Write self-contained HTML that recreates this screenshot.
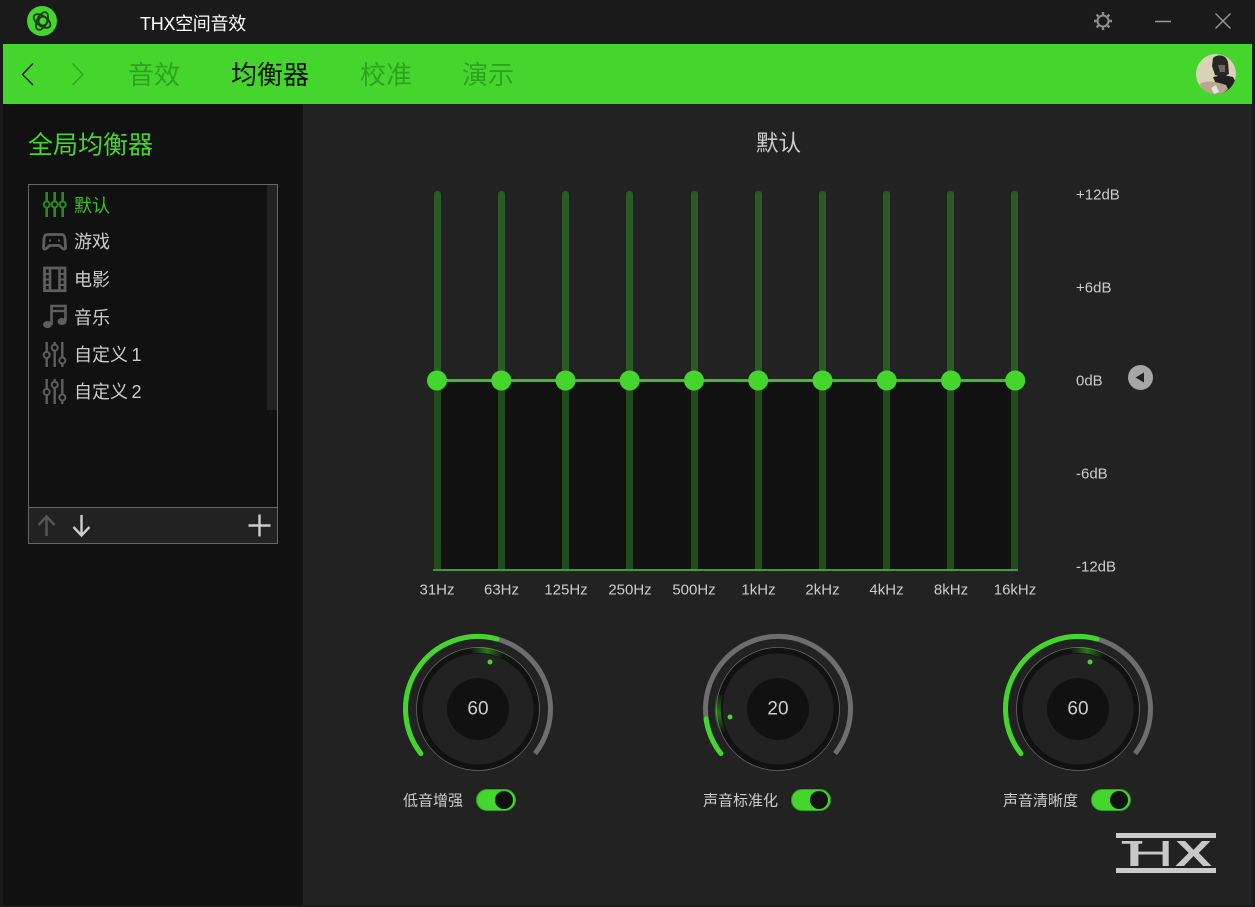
<!DOCTYPE html>
<html lang="zh"><head><meta charset="utf-8"><title>THX空间音效</title>
<style>
html,body{margin:0;padding:0;background:#1a1a1a;}
body{width:1255px;height:907px;overflow:hidden;position:relative;font-family:"Liberation Sans","Noto Sans CJK SC",sans-serif;color:#ccc;}
.a{position:absolute;white-space:nowrap;}
.t{line-height:1;transform:translateY(-50%);}
.c{transform:translate(-50%,-50%);line-height:1;}
.tog{position:absolute;top:789px;width:40px;height:22px;border-radius:11px;background:#44d62c;box-sizing:border-box;border:1px solid #2fa31f;}
.tog i{position:absolute;right:2px;top:1px;width:18px;height:18px;border-radius:9px;background:#111;}
</style></head><body>
<div class="a" style="left:3px;top:44px;width:1249px;height:60px;background:#44d62c"></div>
<div class="a" style="left:3px;top:104px;width:300px;height:801px;background:#111"></div>
<div class="a" style="left:303px;top:104px;width:949px;height:801px;background:#222"></div>

<svg class="a" style="left:0;top:0" width="1255" height="907" viewBox="0 0 1255 907" fill="none">
<defs>
<linearGradient id="g1" gradientUnits="userSpaceOnUse" x1="-8" y1="0" x2="26" y2="0"><stop offset="0" stop-color="#44d62c" stop-opacity="0"/><stop offset=".5" stop-color="#44d62c" stop-opacity=".5"/><stop offset="1" stop-color="#44d62c" stop-opacity="0"/></linearGradient>
<linearGradient id="g2" gradientUnits="userSpaceOnUse" x1="0" y1="-16" x2="0" y2="24"><stop offset="0" stop-color="#44d62c" stop-opacity="0"/><stop offset=".5" stop-color="#44d62c" stop-opacity=".5"/><stop offset="1" stop-color="#44d62c" stop-opacity="0"/></linearGradient>
<g id="knob">
<path d="M57.1 44.6A72.5 72.5 0 1 0 -57.1 44.6" stroke="#6e6e6e" stroke-width="5"/>
<circle r="61.5" fill="#111" stroke="#666" stroke-width=".8"/>
<circle r="55.5" fill="#222"/>
<circle r="31" fill="#111"/>
</g>
</defs>
<!-- logo -->
<circle cx="42" cy="21" r="15" fill="#44d62c"/>
<g stroke="#1c3a18" stroke-width="1.8" transform="translate(42 21)">
<ellipse rx="9.5" ry="5" transform="rotate(35)"/><ellipse rx="9.5" ry="5" transform="rotate(-65)"/><circle r="4.5" cx="1" cy="0"/>
</g>
<!-- window controls -->
<g transform="translate(1103 21)" stroke="#8e8e8e">
<circle r="5.5" stroke-width="2"/>
<path d="M0-9V-6.5M0 6.5V9M-9 0H-6.5M6.5 0H9M-6.4-6.4-4.6-4.6M4.6 4.6 6.4 6.4M-6.4 6.4-4.6 4.6M4.6-4.6 6.4-6.4" stroke-width="2.4"/>
</g>
<path d="M1155 21.5H1171" stroke="#999" stroke-width="1.5"/>
<path d="M1215.5 13.5 1230.5 28.5M1230.5 13.5 1215.5 28.5" stroke="#999" stroke-width="1.4"/>
<!-- nav arrows -->
<path d="M33 63.5 22.5 74.5 33 85" stroke="#111" stroke-width="1.3"/>
<path d="M72.5 63.5 83 74.5 72.5 85" stroke="#2ea320" stroke-width="1.3"/>
<!-- avatar -->
<clipPath id="av"><circle cx="1216" cy="74" r="20"/></clipPath>
<g clip-path="url(#av)">
<rect x="1196" y="54" width="40" height="40" fill="#d9d1b9"/>
<path d="M1213 58C1217 54 1226 54 1228 62L1229 74 1222 77 1215 75 1212 66Z" fill="#2a2624"/>
<path d="M1218 65H1225L1225 72 1220 72Z" fill="#6f675e"/>
<path d="M1213 77 1224 75 1233 77 1237 84 1235 94 1216 94 1216 84Z" fill="#22201f"/>
<path d="M1200 84C1205 80 1214 81 1226 85L1228 89 1222 94 1208 94 1202 90Z" fill="#b9a593"/>
<path d="M1211 88 1216 85 1219 92 1214 94Z" fill="#e8e4da"/>
</g>
<!-- eq -->
<rect x="437" y="381" width="577" height="189" fill="#111"/>
<g fill="#2b5a26">
<rect x="434" y="191" width="7" height="195" rx="3"/><rect x="498" y="191" width="7" height="195" rx="3"/><rect x="562" y="191" width="7" height="195" rx="3"/><rect x="626" y="191" width="7" height="195" rx="3"/><rect x="691" y="191" width="7" height="195" rx="3"/><rect x="755" y="191" width="7" height="195" rx="3"/><rect x="819" y="191" width="7" height="195" rx="3"/><rect x="883" y="191" width="7" height="195" rx="3"/><rect x="947" y="191" width="7" height="195" rx="3"/><rect x="1011" y="191" width="7" height="195" rx="3"/>
</g>
<g fill="#214c1c">
<rect x="434" y="380" width="7" height="190"/><rect x="498" y="380" width="7" height="190"/><rect x="562" y="380" width="7" height="190"/><rect x="626" y="380" width="7" height="190"/><rect x="691" y="380" width="7" height="190"/><rect x="755" y="380" width="7" height="190"/><rect x="819" y="380" width="7" height="190"/><rect x="883" y="380" width="7" height="190"/><rect x="947" y="380" width="7" height="190"/><rect x="1011" y="380" width="7" height="190"/>
</g>
<rect x="433" y="569" width="585" height="2" fill="#34a526"/>
<rect x="437" y="379" width="578" height="3" fill="#3cc028"/>
<g fill="#44d62c">
<circle cx="437" cy="380.5" r="10"/><circle cx="501.3" cy="380.5" r="10"/><circle cx="565.5" cy="380.5" r="10"/><circle cx="629.7" cy="380.5" r="10"/><circle cx="694" cy="380.5" r="10"/><circle cx="758.2" cy="380.5" r="10"/><circle cx="822.5" cy="380.5" r="10"/><circle cx="886.7" cy="380.5" r="10"/><circle cx="951" cy="380.5" r="10"/><circle cx="1015.2" cy="380.5" r="10"/>
</g>
<circle cx="1140.5" cy="377.5" r="12.5" fill="#a6a6a6"/>
<path d="M1135.5 377.5 1144 372.5V382.5Z" fill="#222"/>
<!-- list box -->
<rect x="28.5" y="184.5" width="249" height="359" stroke="#666" fill="none"/>
<rect x="267" y="185" width="10" height="225" fill="#222"/>
<rect x="29" y="508" width="248" height="35" fill="#222"/>
<path d="M29 507.5H277" stroke="#666"/>
<path d="M46.5 536V516.5M38.5 525 46.5 516.5 54.5 525" stroke="#555" stroke-width="2.4"/>
<path d="M81.5 515V535.5M73.5 527 81.5 535.5 89.5 527" stroke="#ccc" stroke-width="2.4"/>
<path d="M259.5 514.5V536.5M248.5 525.5H270.5" stroke="#ccc" stroke-width="2.4"/>
<!-- list icons -->
<g stroke="#2a8a20" stroke-width="2.6">
<path d="M46.7 192V217M54.7 192V217M62.7 192V217"/>
<g fill="#111" stroke-width="2"><circle cx="46.7" cy="204.5" r="3"/><circle cx="54.7" cy="204.5" r="3"/><circle cx="62.7" cy="204.5" r="3"/></g>
</g>
<g stroke="#5e5e5e" stroke-width="2.8">
<path d="M47.5 234.5H61.5C64 234.5 64.7 236 65 239L65.5 247.5C65.5 249.5 63.5 249.5 62 248L59.5 245.5H49.5L47 248C45.5 249.5 43.5 249.5 43.5 247.5L44 239C44.3 236 45 234.5 47.5 234.5Z"/>
<path d="M49 240.5H51M58 240.5H60" stroke-width="2"/>
<rect x="44.5" y="268" width="20.5" height="22.7" stroke-width="2.8"/>
<path d="M50 268V290.7M59.5 268V290.7" stroke-width="2.6"/>
<path d="M44 274H50M59 274H65M44 279.5H50M59 279.5H65M44 285H50M59 285H65" stroke-width="2"/>
<path d="M51.5 325V306H65.5V321" stroke-width="2.6"/>
<path d="M51.5 311H65.5" stroke-width="2.4"/>
</g>
<ellipse cx="47.5" cy="324.5" rx="4.5" ry="3.5" fill="#5e5e5e"/>
<ellipse cx="62" cy="321.5" rx="4.5" ry="3.5" fill="#5e5e5e"/>
<g stroke="#5e5e5e" stroke-width="2.4">
<path d="M46.7 342V367M54.7 342V367M62.3 342V367"/>
<g fill="#111" stroke-width="2"><circle cx="46.7" cy="355" r="3"/><circle cx="54.7" cy="347.7" r="3"/><circle cx="62.3" cy="360.5" r="3"/></g>
<path d="M46.7 379V404M54.7 379V404M62.3 379V404"/>
<g fill="#111" stroke-width="2"><circle cx="46.7" cy="392" r="3"/><circle cx="54.7" cy="384.7" r="3"/><circle cx="62.3" cy="397.5" r="3"/></g>
</g>
<!-- knobs -->
<g transform="translate(478 709)">
<use href="#knob"/>
<path d="M-57.1 44.6A72.5 72.5 0 0 1 19 -70" stroke="#44d62c" stroke-width="5" stroke-linecap="round"/>
<path d="M-8 -58.5A59 59 0 0 1 26 -53" stroke="url(#g1)" stroke-width="6"/>
<circle cx="12" cy="-47" r="2.5" fill="#44d62c"/>
</g>
<g transform="translate(778 709)">
<use href="#knob"/>
<path d="M-57.1 44.6A72.5 72.5 0 0 1 -72 9.8" stroke="#44d62c" stroke-width="5" stroke-linecap="round"/>
<path d="M-58 -16A60 60 0 0 0 -55 24" stroke="url(#g2)" stroke-width="6"/>
<circle cx="-48" cy="8" r="2.5" fill="#44d62c"/>
</g>
<g transform="translate(1078 709)">
<use href="#knob"/>
<path d="M-57.1 44.6A72.5 72.5 0 0 1 19 -70" stroke="#44d62c" stroke-width="5" stroke-linecap="round"/>
<path d="M-8 -58.5A59 59 0 0 1 26 -53" stroke="url(#g1)" stroke-width="6"/>
<circle cx="12" cy="-47" r="2.5" fill="#44d62c"/>
</g>
<!-- THX logo -->
<rect x="1116" y="833" width="100" height="5" fill="#ccc"/>
<rect x="1116" y="868" width="100" height="5" fill="#ccc"/>
<g font-family="Liberation Sans" font-size="36" fill="#c8c8c8">
<text x="1121" y="866" textLength="22" lengthAdjust="spacingAndGlyphs">T</text>
<text x="1127" y="866" textLength="47" lengthAdjust="spacingAndGlyphs">H</text>
<text x="1175" y="866" font-weight="bold" textLength="37" lengthAdjust="spacingAndGlyphs">X</text>
</g>
</svg>

<div class="a t" style="left:140px;top:24px;font-size:18px;color:#fff;letter-spacing:-.3px">THX空间音效</div>
<div class="a t" style="left:128px;top:75px;font-size:26px;color:#2ea320">音效</div>
<div class="a t" style="left:231px;top:75px;font-size:26px;color:#111">均衡器</div>
<div class="a t" style="left:360px;top:75px;font-size:26px;color:#2ea320">校准</div>
<div class="a t" style="left:462px;top:75px;font-size:26px;color:#2ea320">演示</div>

<div class="a t" style="left:28px;top:146px;font-size:25px;color:#44d62c">全局均衡器</div>
<div class="a t" style="left:74px;top:206px;font-size:18px;color:#3cc028">默认</div>
<div class="a t" style="left:74px;top:242px;font-size:18px">游戏</div>
<div class="a t" style="left:74px;top:280px;font-size:18px">电影</div>
<div class="a t" style="left:74px;top:318px;font-size:18px">音乐</div>
<div class="a t" style="left:74px;top:355px;font-size:18px;word-spacing:-1.5px">自定义 1</div>
<div class="a t" style="left:74px;top:392px;font-size:18px;word-spacing:-1.5px">自定义 2</div>

<div class="a c" style="left:778.5px;top:144px;font-size:22.5px">默认</div>

<div class="a t" style="left:1076px;top:195px;font-size:15px">+12dB</div>
<div class="a t" style="left:1076px;top:288px;font-size:15px">+6dB</div>
<div class="a t" style="left:1076px;top:381px;font-size:15px">0dB</div>
<div class="a t" style="left:1076px;top:474px;font-size:15px">-6dB</div>
<div class="a t" style="left:1076px;top:567px;font-size:15px">-12dB</div>

<div class="a c" style="left:437px;top:590px;font-size:15px">31Hz</div>
<div class="a c" style="left:501.5px;top:590px;font-size:15px">63Hz</div>
<div class="a c" style="left:566px;top:590px;font-size:15px">125Hz</div>
<div class="a c" style="left:630px;top:590px;font-size:15px">250Hz</div>
<div class="a c" style="left:694px;top:590px;font-size:15px">500Hz</div>
<div class="a c" style="left:758.5px;top:590px;font-size:15px">1kHz</div>
<div class="a c" style="left:822.5px;top:590px;font-size:15px">2kHz</div>
<div class="a c" style="left:886.5px;top:590px;font-size:15px">4kHz</div>
<div class="a c" style="left:951px;top:590px;font-size:15px">8kHz</div>
<div class="a c" style="left:1015px;top:590px;font-size:15px">16kHz</div>

<div class="a c" style="left:478px;top:709px;font-size:19px">60</div>
<div class="a c" style="left:778px;top:709px;font-size:19px">20</div>
<div class="a c" style="left:1078px;top:709px;font-size:19px">60</div>

<div class="a t" style="left:403px;top:801px;font-size:15px">低音增强</div>
<div class="tog" style="left:476px"><i></i></div>
<div class="a t" style="left:703px;top:801px;font-size:15px">声音标准化</div>
<div class="tog" style="left:791px"><i></i></div>
<div class="a t" style="left:1003px;top:801px;font-size:15px">声音清晰度</div>
<div class="tog" style="left:1091px"><i></i></div>
</body></html>
